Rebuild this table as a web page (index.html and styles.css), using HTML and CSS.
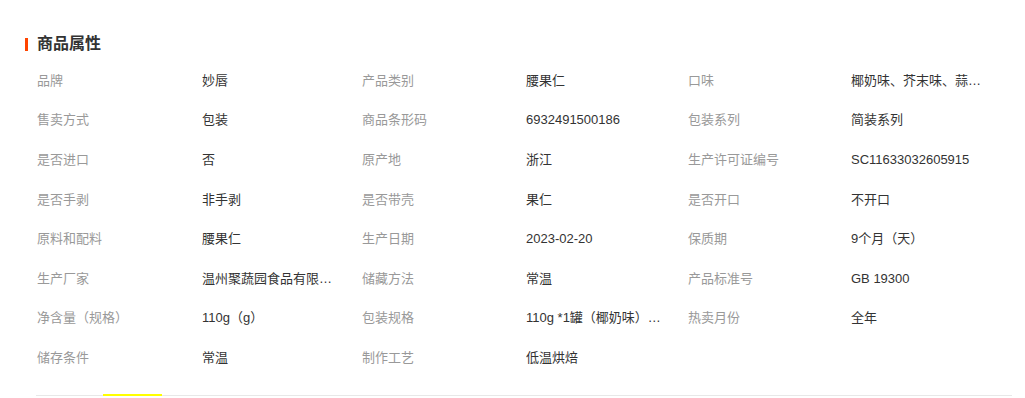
FILE: index.html
```html
<!DOCTYPE html>
<html lang="zh-CN">
<head>
<meta charset="utf-8">
<title>商品属性</title>
<link rel="stylesheet" href="styles.css">
</head>
<body>
<section class="attrs">
  <h2 class="attrs-title"><span class="attrs-mark"></span>商品属性</h2>
  <div class="attrs-grid">
    <span class="k">品牌</span><span class="v">妙唇</span>
    <span class="k">产品类别</span><span class="v">腰果仁</span>
    <span class="k">口味</span><span class="v">椰奶味、芥末味、蒜香味</span>

    <span class="k">售卖方式</span><span class="v">包装</span>
    <span class="k">商品条形码</span><span class="v">6932491500186</span>
    <span class="k">包装系列</span><span class="v">简装系列</span>

    <span class="k">是否进口</span><span class="v">否</span>
    <span class="k">原产地</span><span class="v">浙江</span>
    <span class="k">生产许可证编号</span><span class="v">SC11633032605915</span>

    <span class="k">是否手剥</span><span class="v">非手剥</span>
    <span class="k">是否带壳</span><span class="v">果仁</span>
    <span class="k">是否开口</span><span class="v">不开口</span>

    <span class="k">原料和配料</span><span class="v">腰果仁</span>
    <span class="k">生产日期</span><span class="v">2023-02-20</span>
    <span class="k">保质期</span><span class="v">9个月（天）</span>

    <span class="k">生产厂家</span><span class="v">温州聚蔬园食品有限公司</span>
    <span class="k">储藏方法</span><span class="v">常温</span>
    <span class="k">产品标准号</span><span class="v">GB 19300</span>

    <span class="k">净含量（规格）</span><span class="v">110g（g）</span>
    <span class="k">包装规格</span><span class="v">110g *1罐（椰奶味）+110g *1罐（芥末味）</span>
    <span class="k">热卖月份</span><span class="v">全年</span>

    <span class="k">储存条件</span><span class="v">常温</span>
    <span class="k">制作工艺</span><span class="v">低温烘焙</span>
  </div>
  <div class="attrs-foot"><span class="attrs-flag"></span></div>
</section>
</body>
</html>
```
FILE: styles.css
```css
html, body {
  margin: 0;
  padding: 0;
  background: #fff;
}
body {
  font-family: "Liberation Sans", "Noto Sans CJK SC", sans-serif;
  font-size: 13px;
  color: #333;
}
.attrs {
  padding: 34px 13px 0 25px;
}
.attrs-title {
  display: flex;
  align-items: center;
  gap: 9px;
  margin: 0;
  height: 20px;
  font-size: 16px;
  font-weight: bold;
  line-height: 20px;
  color: #333;
}
.attrs-mark {
  display: block;
  width: 3px;
  height: 13px;
  background: #ff4400;
}
.attrs-grid {
  display: grid;
  grid-template-columns: 165px 160px 164px 162px 163px 1fr;
  grid-auto-rows: 39.6px;
  align-items: center;
  margin: 7px 0 0 12px;
  line-height: 18px;
}
.k {
  color: #999;
  white-space: nowrap;
}
.v {
  color: #333;
  max-width: 140px;
  white-space: nowrap;
  overflow: hidden;
  text-overflow: ellipsis;
}
.attrs-foot {
  position: relative;
  margin: 17px 0 0 11px;
  height: 1px;
  background: #e8e8e8;
}
.attrs-flag {
  position: absolute;
  left: 67px;
  top: -1px;
  width: 59px;
  height: 4px;
  background: #ffff00;
}
```
